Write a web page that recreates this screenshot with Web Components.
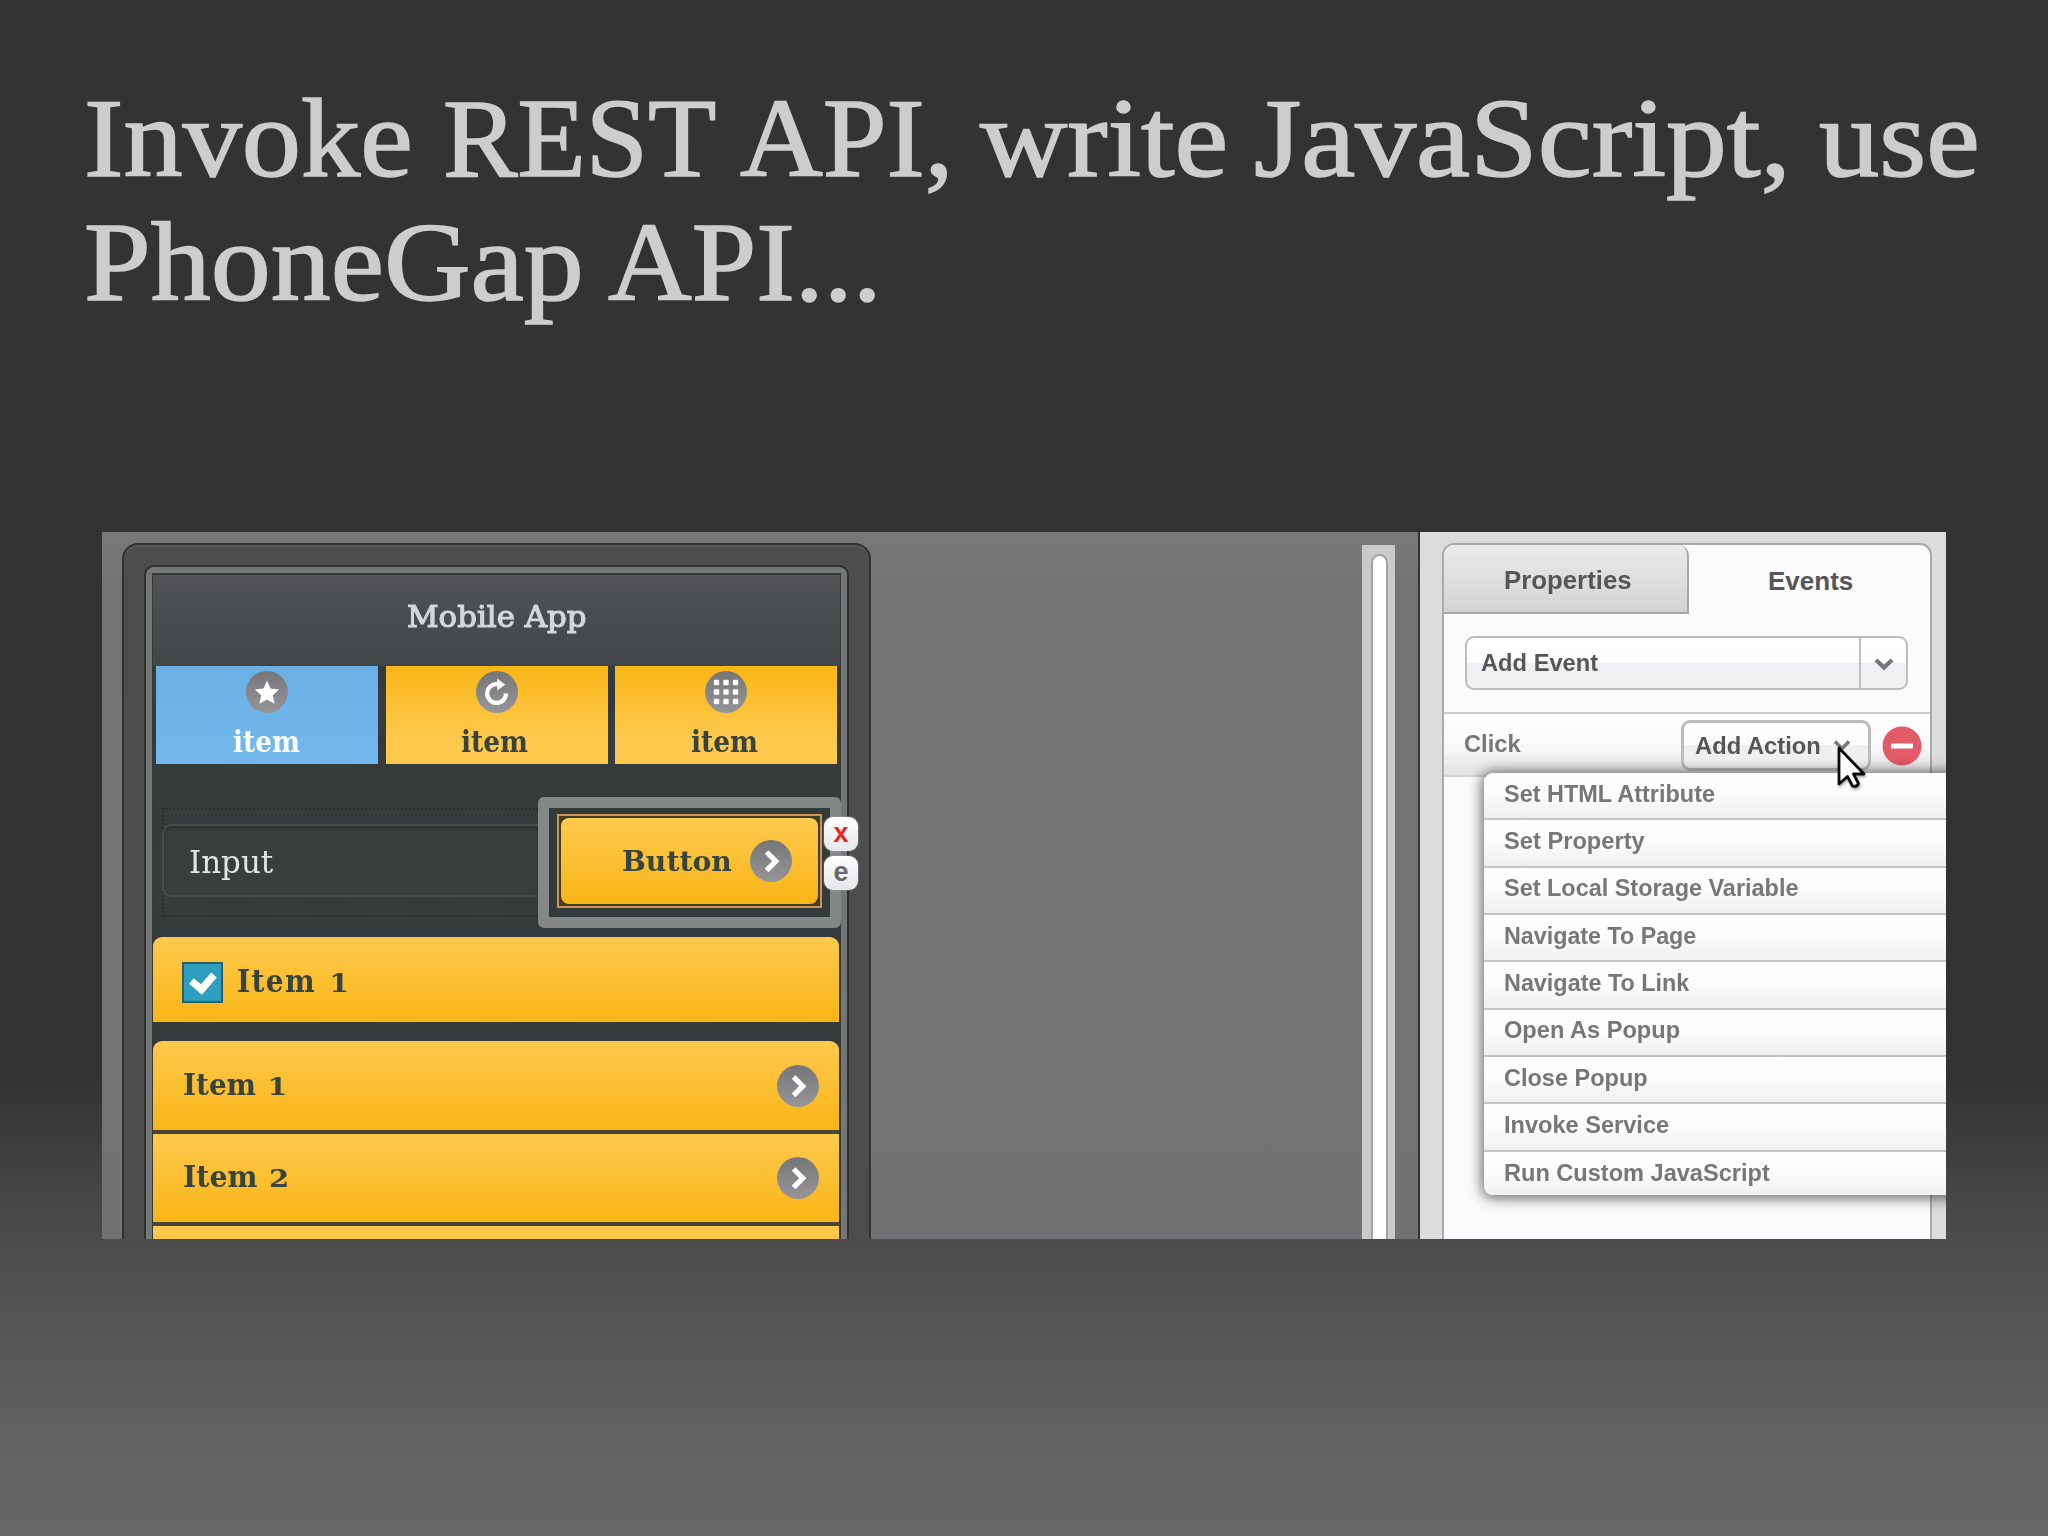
<!DOCTYPE html>
<html lang="en">
<head>
<meta charset="UTF-8">
<title>Invoke REST API, write JavaScript, use PhoneGap API...</title>
<style>
    html, body {
        margin: 0;
        width: 2048px;
        height: 1536px;
        overflow: hidden;
    }

    /* low, wide numerals of the theme font */
    small {
        display: inline-block;
        font-size: .82em;
        margin: 0 3px 0 2px;
        transform: scaleX(1.25);
        transform-origin: 0 50%;
    }
</style>
</head>
<body>
<app-slide>
    <slide-title slot="title">
        <div>
            <fit-text width="329" gap="30">Invoke</fit-text>
            <fit-text width="273" gap="24">REST</fit-text>
            <fit-text width="213" gap="27">API,</fit-text>
            <fit-text width="248" gap="26">write</fit-text>
            <fit-text width="537" gap="28">JavaScript,</fit-text>
            <fit-text width="161">use</fit-text>
        </div>
        <div>
            <fit-text width="500" gap="24">PhoneGap</fit-text>
            <fit-text width="274">API...</fit-text>
        </div>
    </slide-title>
    <design-stage>
        <phone-frame>
            <phone-header><fit-text width="180">Mobile App</fit-text></phone-header>
            <phone-tabs>
                <phone-tab icon="star" active><fit-text width="67" gap="2">item</fit-text></phone-tab>
                <phone-tab icon="refresh"><fit-text width="67" gap="5">item</fit-text></phone-tab>
                <phone-tab icon="grid"><fit-text width="67" gap="4">item</fit-text></phone-tab>
            </phone-tabs>
            <phone-form>
                <fit-text slot="input" width="84">Input</fit-text>
                <fit-text slot="button" width="110">Button</fit-text>
            </phone-form>
            <phone-check><fit-text width="112">Item <small>1</small></fit-text></phone-check>
            <phone-list>
                <phone-row><fit-text width="103">Item <small>1</small></fit-text></phone-row>
                <phone-row><fit-text width="105">Item <small>2</small></fit-text></phone-row>
                <phone-row></phone-row>
            </phone-list>
        </phone-frame>
        <stage-scroll slot="scroll"></stage-scroll>
        <events-panel slot="panel">
            <action-menu slot="menu">
                <action-item><fit-text width="211">Set HTML Attribute</fit-text></action-item>
                <action-item><fit-text width="141">Set Property</fit-text></action-item>
                <action-item><fit-text width="294">Set Local Storage Variable</fit-text></action-item>
                <action-item><fit-text width="192">Navigate To Page</fit-text></action-item>
                <action-item><fit-text width="185">Navigate To Link</fit-text></action-item>
                <action-item><fit-text width="176">Open As Popup</fit-text></action-item>
                <action-item><fit-text width="144">Close Popup</fit-text></action-item>
                <action-item><fit-text width="165">Invoke Service</fit-text></action-item>
                <action-item><fit-text width="266">Run Custom JavaScript</fit-text></action-item>
            </action-menu>
        </events-panel>
    </design-stage>
</app-slide>

<script>
// shared base: every element only brings its own template string
class Base extends HTMLElement {
    constructor() {
        super();
        this.attachShadow({mode: 'open'});
    }

    connectedCallback() {
        this.shadowRoot.innerHTML = this.template();
    }
}

class AppSlide extends Base {
    template() {
        return `
        <style>
            :host {
                display: flex;
                flex-direction: column;
                box-sizing: border-box;
                width: 2048px;
                height: 1536px;
                padding: 76px 0 0 84px;
                background: linear-gradient(#333 0, #323232 1075px, #484848 1210px, #545454 1310px, #636363 1450px, #676667 1536px);
            }
            .body { padding: 208px 0 0 18px; }
        </style>
        <slot name="title"></slot>
        <div class="body"><slot></slot></div>`;
    }
}

class SlideTitle extends Base {
    template() {
        return `
        <style>
            :host {
                display: block;
                font: 113px/124px "Liberation Serif", serif;
                color: #cdcdcd;
                -webkit-text-stroke: 1.6px #cdcdcd;
            }
            ::slotted(div) { display: flex; height: 124px; }
        </style>
        <slot></slot>`;
    }
}

class DesignStage extends Base {
    template() {
        return `
        <style>
            :host {
                display: flex;
                width: 1844px;
                height: 707px;
                overflow: hidden;
                background: linear-gradient(#797979, #737274 60px, #727173);
            }
            .canvas {
                flex: 1;
                padding: 11px 0 0 20px;
            }
        </style>
        <div class="canvas"><slot></slot></div>
        <slot name="scroll"></slot>
        <slot name="panel"></slot>`;
    }
}

class PhoneFrame extends Base {
    template() {
        return `
        <style>
            :host {
                display: block;
                box-sizing: border-box;
                width: 749px;
                height: 760px;
                padding: 20px 20px 0 20px;
                border: 2px solid #303030;
                border-radius: 16px;
                background: #4d4d4e;
                box-shadow: inset 0 2px 0 #5a5a5a;
            }
            .bezel {
                box-sizing: border-box;
                width: 705px;
                height: 740px;
                padding: 6px 6px 0;
                border: 2px solid #303232;
                border-radius: 10px;
                background: #757777;
            }
            .screen {
                box-sizing: border-box;
                width: 689px;
                height: 720px;
                border: 1px solid #343837;
                border-top-width: 2px;
                background: repeating-linear-gradient(45deg, #363d3c 0 26px, #343b3a 36px 60px, #363d3c 70px);
                font: bold 30px/30px "DejaVu Serif", serif;
                color: #37443f;
            }
        </style>
        <div class="bezel"><div class="screen"><slot></slot></div></div>`;
    }
}

class PhoneHeader extends Base {
    template() {
        return `
        <style>
            :host {
                display: flex;
                align-items: center;
                justify-content: center;
                box-sizing: border-box;
                height: 91px;
                padding-bottom: 7px;
                background: linear-gradient(#525357, #474c4f 50%, #414646);
                color: #d3d6da;
                font-weight: normal;
                -webkit-text-stroke: 1.2px #d3d6da;
            }
        </style>
        <slot></slot>`;
    }
}

class PhoneTabs extends Base {
    template() {
        return `
        <style>
            :host {
                display: flex;
                justify-content: space-between;
                height: 98px;
                padding: 0 3px;
            }
        </style>
        <slot></slot>`;
    }
}

class PhoneTab extends Base {
    template() {
        return `
        <style>
            :host {
                display: flex;
                flex-direction: column;
                align-items: center;
                gap: 14px;
                box-sizing: border-box;
                width: 222px;
                padding-top: 5px;
                background: linear-gradient(#f9b618, #ffc94d 75%);
            }
            :host([active]) {
                background: linear-gradient(#6ab0e4, #73b8ed);
                color: #fff;
            }
        </style>
        <round-icon name="${this.getAttribute('icon')}"></round-icon>
        <slot></slot>`;
    }
}

// grey disc with a white glyph
class RoundIcon extends Base {
    template() {
        const glyphs = {
            star: '<path fill="#fff" d="M21 9.5l3.6 8 8.6.9-6.4 5.8 1.8 8.6-7.6-4.4-7.6 4.4 1.8-8.6-6.4-5.8 8.6-.9z"/>',
            refresh: '<path fill="none" stroke="#fff" stroke-width="4.2" d="M30 22.5a9.4 9.4 0 1 1-9.4-9.4h2"/><path fill="#fff" d="M21 7.6l8.2 6-7.8 6z"/>',
            grid: [11.5, 21, 30.5].map(y => [11.5, 21, 30.5].map(x =>
                `<rect x="${x - 2.7}" y="${y - 2.7}" width="5.4" height="5.4" rx="1" fill="#fff"/>`).join('')).join(''),
            arrow: '<path fill="none" stroke="#fff" stroke-width="5.2" d="M16.6 12l9.2 9.2-9.2 9.2"/>'
        };
        return `
        <style>
            :host { display: block; width: 42px; height: 42px; flex: none; }
            svg { display: block; }
        </style>
        <svg width="42" height="42" viewBox="0 0 42 42">
            <defs><linearGradient id="g" x1="0" y1="0" x2="0" y2="1">
                <stop offset="0" stop-color="#767577"/><stop offset="1" stop-color="#969597"/>
            </linearGradient></defs>
            <circle cx="21" cy="21" r="21" fill="url(#g)"/>
            ${glyphs[this.getAttribute('name')]}
        </svg>`;
    }
}

class PhoneForm extends Base {
    template() {
        return `
        <style>
            :host {
                display: flex;
                position: relative;
                height: 132px;
                padding: 33px 0 8px 9px;
            }
            .group {
                flex: 1;
                box-sizing: border-box;
                height: 109px;
                margin-top: 11px;
                padding-top: 14px;
                border: 2px dotted #2a302f;
                border-right: 0;
            }
            .input {
                display: flex;
                align-items: center;
                box-sizing: border-box;
                height: 73px;
                margin-left: -2px;
                padding: 3px 0 0 25px;
                border: 2px solid #474c4b;
                border-right: 0;
                border-radius: 10px 0 0 10px;
                background: #393e3d;
                box-shadow: inset 0 3px 3px #303534;
                font-size: 32px;
                font-weight: normal;
                color: #dfe6e5;
            }
            .selection {
                position: relative;
                box-sizing: border-box;
                width: 303px;
                height: 131px;
                margin-right: -1px;
                padding: 6px 8px;
                border: 11px solid #838786;
                border-radius: 6px;
                background: #333b3a;
            }
            .outline {
                box-sizing: border-box;
                width: 265px;
                height: 94px;
                padding: 2px;
                border: 2px solid #d09552;
                background: #3f3e2c;
            }
            .button {
                display: flex;
                align-items: center;
                justify-content: flex-end;
                gap: 18px;
                box-sizing: border-box;
                height: 86px;
                padding: 0 26px 1px 0;
                border-radius: 8px;
                background: linear-gradient(#ffc94d, #f8b517);
                font-size: 28.5px;
            }
            .badge {
                position: absolute;
                left: 275px;
                width: 34px;
                height: 34px;
                border-radius: 9px;
                background: linear-gradient(#fff, #e6e6ea);
                box-shadow: 0 0 2px #aaa;
                font: bold 27px/32px "Liberation Sans", sans-serif;
                text-align: center;
                color: #69696b;
            }
            .badge.x { top: 9px; color: #f41f25; }
            .badge.e { top: 48px; }
        </style>
        <div class="group"><div class="input"><slot name="input"></slot></div></div>
        <div class="selection">
            <div class="outline"><div class="button"><slot name="button"></slot><round-icon name="arrow"></round-icon></div></div>
            <div class="badge x">x</div>
            <div class="badge e">e</div>
        </div>`;
    }
}

class PhoneCheck extends Base {
    template() {
        return `
        <style>
            :host {
                display: flex;
                align-items: center;
                gap: 14px;
                box-sizing: border-box;
                height: 85px;
                margin-right: 1px;
                padding: 5px 0 0 29px;
                border-radius: 9px 9px 0 0;
                background: linear-gradient(#ffc94d, #f8b517);
                font-size: 31px;
                letter-spacing: 1.5px;
            }
            svg { display: block; }
        </style>
        <svg width="41" height="41" viewBox="0 0 41 41">
            <rect x="1" y="1" width="39" height="39" fill="#2f9fc0" stroke="#2c606b" stroke-width="2"/>
            <path d="M9.5 19l10 8.5L32 13" fill="none" stroke="#fff" stroke-width="7.5"/>
        </svg>
        <slot></slot>`;
    }
}

class PhoneList extends Base {
    template() {
        return `
        <style>
            :host {
                display: flex;
                flex-direction: column;
                gap: 4px;
                margin: 19px 1px 0 0;
                border-radius: 9px 9px 0 0;
                background: #4b4537;
                overflow: hidden;
            }
        </style>
        <slot></slot>`;
    }
}

class PhoneRow extends Base {
    template() {
        return `
        <style>
            :host {
                display: flex;
                align-items: center;
                justify-content: space-between;
                box-sizing: border-box;
                height: 88.5px;
                padding: 1px 20px 0 30px;
                background: linear-gradient(#ffc94d, #f8b517);
            }
        </style>
        <slot></slot>
        <round-icon name="arrow"></round-icon>`;
    }
}

class StageScroll extends Base {
    template() {
        return `
        <style>
            :host {
                display: block;
                box-sizing: border-box;
                width: 33px;
                margin: 13px 23px 0 0;
                padding: 9px 7px 0 9px;
                background: #cacaca;
            }
            .thumb {
                height: 720px;
                border: 2px solid #a3a3a3;
                border-radius: 9px;
                background: #fff;
                box-sizing: border-box;
            }
        </style>
        <div class="thumb"></div>`;
    }
}

class EventsPanel extends Base {
    template() {
        return `
        <style>
            :host {
                display: block;
                position: relative;
                box-sizing: border-box;
                width: 528px;
                height: 707px;
                padding: 11px 14px 0 22px;
                border-left: 2px solid #343435;
                background: #dcdcdd;
                font: bold 24.5px/26px "Liberation Sans", sans-serif;
                color: #565658;
            }
            .card {
                box-sizing: border-box;
                height: 720px;
                border: 2px solid #a9a9ab;
                border-radius: 12px;
                background: #fbfafc;
            }
            .tabs { display: flex; height: 69px; font-size: 26px; }
            .tab {
                display: flex;
                align-items: center;
                justify-content: center;
                box-sizing: border-box;
                flex: 1;
                padding: 3px 0 0 2px;
            }
            .tab.idle {
                flex: none;
                width: 245px;
                padding-left: 4px;
                border-right: 2px solid #a9a9ab;
                border-bottom: 2px solid #a9a9ab;
                border-radius: 10px 10px 0 0;
                background: linear-gradient(#ebebec, #d3d3d5);
            }
            .select {
                display: flex;
                box-sizing: border-box;
                height: 54px;
                margin: 22px 22px 0 21px;
                border: 2px solid #bdbdbf;
                border-radius: 9px;
                background: linear-gradient(#fff, #fdfdfd 50%, #efeef0 50%, #f1f0f2);
            }
            .select .value { display: flex; align-items: center; flex: 1; padding-left: 14px; }
            .select .toggle {
                display: flex;
                align-items: center;
                justify-content: center;
                width: 45px;
                padding-top: 2px;
                border-left: 2px solid #bdbdbf;
            }
            .row {
                display: flex;
                align-items: center;
                box-sizing: border-box;
                height: 65px;
                margin-top: 22px;
                padding: 2px 8px 0 20px;
                border-top: 2px solid #cbcbcd;
                border-bottom: 2px solid #d4d4d6;
                background: linear-gradient(#fff, #f8f8f9 55%, #e3e3e5);
                color: #777779;
            }
            .row > fit-text { padding-bottom: 3px; }
            .action {
                display: flex;
                align-items: center;
                gap: 12px;
                box-sizing: border-box;
                width: 190px;
                height: 51px;
                margin: 0 11px 0 auto;
                padding-left: 11px;
                border: 3px solid #bcbcbe;
                border-radius: 9px;
                background: linear-gradient(#fff, #fcfcfc 50%, #eeeeef 50%, #f2f2f3);
                color: #565658;
            }
            .cursor {
                position: absolute;
                left: 415px;
                top: 212px;
                filter: drop-shadow(1px 2px 1px rgba(0, 0, 0, .3));
            }
        </style>
        <div class="card">
            <div class="tabs">
                <div class="tab idle"><fit-text width="128">Properties</fit-text></div>
                <div class="tab"><fit-text width="85">Events</fit-text></div>
            </div>
            <div class="select">
                <div class="value"><fit-text width="117">Add Event</fit-text></div>
                <div class="toggle">
                    <svg width="20" height="14" viewBox="0 0 20 14"><path d="M2 3l8 7.5L18 3" fill="none" stroke="#77777a" stroke-width="4.2"/></svg>
                </div>
            </div>
            <div class="row">
                <fit-text width="57">Click</fit-text>
                <div class="action">
                    <fit-text width="126">Add Action</fit-text>
                    <svg width="18" height="14" viewBox="0 0 18 14"><path d="M2 2.5l7 7L16 2.5" fill="none" stroke="#77777a" stroke-width="3.4"/></svg>
                </div>
                <svg width="40" height="40" viewBox="0 0 40 40">
                    <circle cx="20" cy="20" r="19.5" fill="#e25b68"/>
                    <rect x="9" y="17.5" width="22" height="5" rx="1" fill="#fff"/>
                </svg>
            </div>
        </div>
        <slot name="menu"></slot>
        <svg class="cursor" width="34" height="48" viewBox="0 0 34 48">
            <path d="M4 4v36l8.5-7.5 5 9.5q4 1.500 6-2.5l-5-9.5h10.5z" fill="#fff" stroke="#0c0c0c" stroke-width="2.8" stroke-linejoin="round"/>
        </svg>`;
    }
}

class ActionMenu extends Base {
    template() {
        return `
        <style>
            :host {
                position: absolute;
                display: block;
                left: 64px;
                top: 241px;
                width: 500px;
                border-radius: 9px;
                overflow: hidden;
                box-shadow: 0 1px 14px 2px rgba(0, 0, 0, .6);
                font-size: 24px;
                color: #777678;
            }
        </style>
        <slot></slot>`;
    }
}

class ActionItem extends Base {
    template() {
        return `
        <style>
            :host {
                display: flex;
                align-items: center;
                box-sizing: border-box;
                height: 47.35px;
                padding: 0 0 4px 20px;
                border-bottom: 2px solid #c4c3c6;
                background: linear-gradient(#fff, #fbfafc 50%, #f0eff1);
            }
            :host(:last-child) { height: 43px; border-bottom: 0; padding-bottom: 1px; }
        </style>
        <slot></slot>`;
    }
}

// keeps a label at a fixed advance width, whatever font it falls back to
class FitText extends Base {
    template() {
        return `
        <style>
            :host { display: block; flex: none; white-space: nowrap; }
            span { display: inline-block; transform-origin: 0 50%; }
        </style>
        <span><slot></slot></span>`;
    }

    connectedCallback() {
        super.connectedCallback();
        const width = Number(this.getAttribute('width'));
        const span = this.shadowRoot.querySelector('span');
        const natural = span.offsetWidth;
        this.style.width = width + 'px';
        this.style.marginRight = (this.getAttribute('gap') || 0) + 'px';
        span.style.transform = `scaleX(${width / natural})`;
    }
}

customElements.define('app-slide', AppSlide);
customElements.define('slide-title', SlideTitle);
customElements.define('design-stage', DesignStage);
customElements.define('phone-frame', PhoneFrame);
customElements.define('phone-header', PhoneHeader);
customElements.define('phone-tabs', PhoneTabs);
customElements.define('phone-tab', PhoneTab);
customElements.define('phone-form', PhoneForm);
customElements.define('phone-check', PhoneCheck);
customElements.define('phone-list', PhoneList);
customElements.define('phone-row', PhoneRow);
customElements.define('round-icon', RoundIcon);
customElements.define('stage-scroll', StageScroll);
customElements.define('events-panel', EventsPanel);
customElements.define('action-menu', ActionMenu);
customElements.define('action-item', ActionItem);
// last, because it measures text once the fonts of its parents apply
customElements.define('fit-text', FitText);
</script>
</body>
</html>
